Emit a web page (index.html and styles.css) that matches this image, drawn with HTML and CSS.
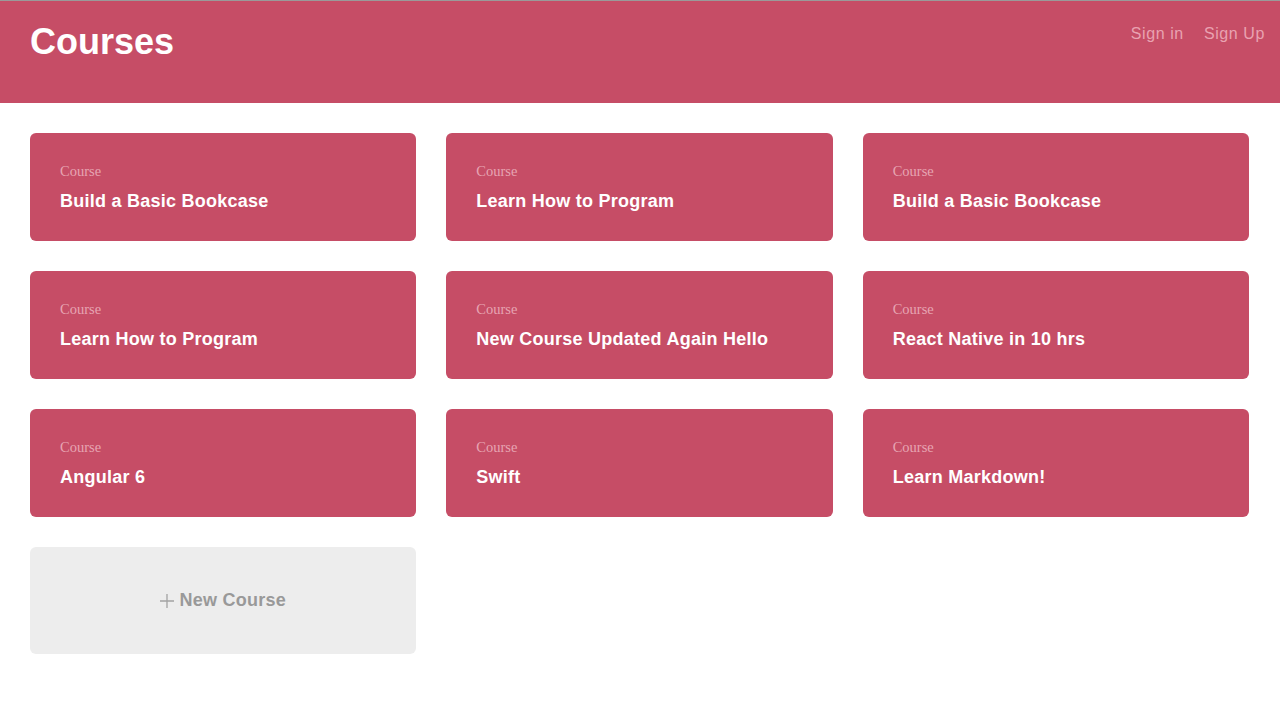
FILE: index.html
```
<!DOCTYPE html>
<html lang="en">
<head>
<meta charset="utf-8">
<title>Courses</title>
<link rel="stylesheet" href="styles.css">
</head>
<body>
<header class="header">
  <h1 class="header-title">Courses</h1>
  <nav class="header-nav">
    <a class="nav-link" href="#">Sign in</a>
    <a class="nav-link" href="#">Sign Up</a>
  </nav>
</header>
<main class="grid">
  <a class="card" href="#"><span class="card-label">Course</span><span class="card-title">Build a Basic Bookcase</span></a>
  <a class="card" href="#"><span class="card-label">Course</span><span class="card-title">Learn How to Program</span></a>
  <a class="card" href="#"><span class="card-label">Course</span><span class="card-title">Build a Basic Bookcase</span></a>
  <a class="card" href="#"><span class="card-label">Course</span><span class="card-title">Learn How to Program</span></a>
  <a class="card" href="#"><span class="card-label">Course</span><span class="card-title">New Course Updated Again Hello</span></a>
  <a class="card" href="#"><span class="card-label">Course</span><span class="card-title">React Native in 10 hrs</span></a>
  <a class="card" href="#"><span class="card-label">Course</span><span class="card-title">Angular 6</span></a>
  <a class="card" href="#"><span class="card-label">Course</span><span class="card-title">Swift</span></a>
  <a class="card" href="#"><span class="card-label">Course</span><span class="card-title">Learn Markdown!</span></a>
  <a class="card card-new" href="#"><span class="new-label"><svg class="plus" width="14" height="14" viewBox="0 0 14 14"><path d="M7 0v14M0 7h14" stroke="#a3a3a3" stroke-width="1.3" fill="none"/></svg>New Course</span></a>
</main>
</body>
</html>
```
FILE: styles.css
```
* { box-sizing: border-box; }
html, body { margin: 0; padding: 0; background: #fff; }
body { font-family: "Liberation Sans", Arial, sans-serif; }

.header {
  display: flex;
  justify-content: space-between;
  align-items: flex-start;
  height: 103px;
  background: #c64d66;
  border-top: 1px solid #9a9a9a;
  padding: 0 15px 0 30px;
}
.header-title {
  margin: 0;
  padding-top: 21px;
  font-size: 36px;
  line-height: 40px;
  font-weight: 700;
  color: #fff;
}
.header-nav {
  display: flex;
  gap: 20px;
  padding-top: 24px;
}
.nav-link {
  color: #e9a2b1;
  text-decoration: none;
  font-size: 16px;
  line-height: 18px;
  letter-spacing: 0.6px;
}

.grid {
  display: grid;
  grid-template-columns: repeat(3, 1fr);
  gap: 30px;
  padding: 30px 31px 30px 30px;
}
.card {
  display: flex;
  flex-direction: column;
  height: 108px;
  padding: 29px 30px 0;
  background: #c64d66;
  border-radius: 6px;
  text-decoration: none;
}
.card-label {
  font-family: "Liberation Serif", "Times New Roman", serif;
  font-size: 14.5px;
  line-height: 18px;
  color: #e6a5b3;
}
.card-title {
  margin-top: 10px;
  font-size: 18px;
  line-height: 22px;
  font-weight: 700;
  letter-spacing: 0.25px;
  color: #fff;
}
.card-new {
  background: #ededed;
  padding: 0;
  align-items: center;
  justify-content: center;
  height: 107px;
}
.new-label {
  display: flex;
  align-items: center;
  font-size: 18px;
  font-weight: 700;
  letter-spacing: 0.25px;
  color: #999;
}
.plus {
  margin-right: 5px;
  margin-top: 1px;
}
```
